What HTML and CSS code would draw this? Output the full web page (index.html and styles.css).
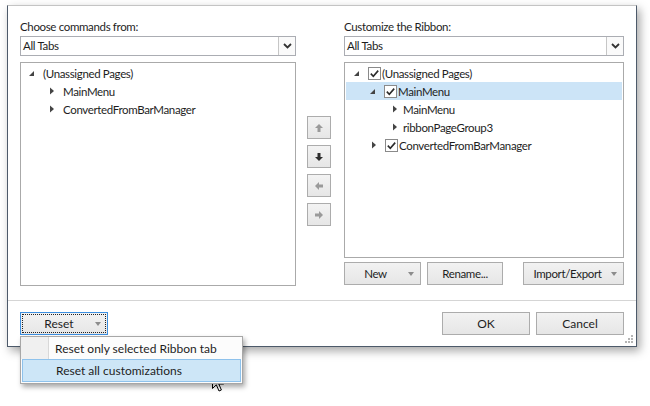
FILE: index.html
```html
<!DOCTYPE html>
<html>
<head>
<meta charset="utf-8">
<link rel="stylesheet" href="styles.css">
</head>
<body>
<div class="dialog">
  <div class="main">
    <section class="panel">
      <div class="label">Choose commands from:</div>
      <div class="combo"><span class="combo-text">All Tabs</span><span class="combo-btn"><svg width="9" height="6" viewBox="0 0 9 6"><path d="M1 1 L4.5 4.5 L8 1" fill="none" stroke="#333" stroke-width="1.8"/></svg></span></div>
      <div class="tree tree-tall">
        <div class="row l0"><svg class="tg" width="10" height="10" viewBox="0 0 10 10"><path d="M1 8 L6 8 L6 3 Z" fill="#444"/></svg><span>(Unassigned Pages)</span></div>
        <div class="row l1"><svg class="tg" width="10" height="10" viewBox="0 0 10 10"><path d="M2 1.5 L6 5 L2 8.5 Z" fill="#444"/></svg><span>MainMenu</span></div>
        <div class="row l1"><svg class="tg" width="10" height="10" viewBox="0 0 10 10"><path d="M2 1.5 L6 5 L2 8.5 Z" fill="#444"/></svg><span>ConvertedFromBarManager</span></div>
      </div>
    </section>
    <div class="movers">
      <button class="mv"><svg width="10" height="10" viewBox="0 0 10 10"><path d="M5 1 L9 5 L6.5 5 L6.5 9 L3.5 9 L3.5 5 L1 5 Z" fill="#9a9a9a"/></svg></button>
      <button class="mv"><svg width="10" height="10" viewBox="0 0 10 10"><path d="M5 9 L9 5 L6.5 5 L6.5 1 L3.5 1 L3.5 5 L1 5 Z" fill="#2e2e2e"/></svg></button>
      <button class="mv"><svg width="10" height="10" viewBox="0 0 10 10"><path d="M1 5 L5 1 L5 3.5 L9 3.5 L9 6.5 L5 6.5 L5 9 Z" fill="#9a9a9a"/></svg></button>
      <button class="mv"><svg width="10" height="10" viewBox="0 0 10 10"><path d="M9 5 L5 1 L5 3.5 L1 3.5 L1 6.5 L5 6.5 L5 9 Z" fill="#9a9a9a"/></svg></button>
    </div>
    <section class="panel panel-right">
      <div class="label">Customize the Ribbon:</div>
      <div class="combo"><span class="combo-text">All Tabs</span><span class="combo-btn"><svg width="9" height="6" viewBox="0 0 9 6"><path d="M1 1 L4.5 4.5 L8 1" fill="none" stroke="#333" stroke-width="1.8"/></svg></span></div>
      <div class="tree tree-short">
        <div class="row r0"><svg class="tg" width="10" height="10" viewBox="0 0 10 10"><path d="M1 8 L6 8 L6 3 Z" fill="#444"/></svg><svg class="cb" width="13" height="13" viewBox="0 0 13 13"><rect x="0.5" y="0.5" width="12" height="12" fill="#fff" stroke="#8a8a8a"/><path d="M2.8 6.6 L5.3 9.2 L10.2 3.6" fill="none" stroke="#2b2b2b" stroke-width="1.6"/></svg><span>(Unassigned Pages)</span></div>
        <div class="row r1 sel"><svg class="tg" width="10" height="10" viewBox="0 0 10 10"><path d="M1 8 L6 8 L6 3 Z" fill="#444"/></svg><svg class="cb" width="13" height="13" viewBox="0 0 13 13"><rect x="0.5" y="0.5" width="12" height="12" fill="#fff" stroke="#8a8a8a"/><path d="M2.8 6.6 L5.3 9.2 L10.2 3.6" fill="none" stroke="#2b2b2b" stroke-width="1.6"/></svg><span>MainMenu</span></div>
        <div class="row r2"><svg class="tg tight" width="10" height="10" viewBox="0 0 10 10"><path d="M2 1.5 L6 5 L2 8.5 Z" fill="#444"/></svg><span>MainMenu</span></div>
        <div class="row r2"><svg class="tg tight" width="10" height="10" viewBox="0 0 10 10"><path d="M2 1.5 L6 5 L2 8.5 Z" fill="#444"/></svg><span>ribbonPageGroup3</span></div>
        <div class="row r1b"><svg class="tg" width="10" height="10" viewBox="0 0 10 10"><path d="M2 1.5 L6 5 L2 8.5 Z" fill="#444"/></svg><svg class="cb" width="13" height="13" viewBox="0 0 13 13"><rect x="0.5" y="0.5" width="12" height="12" fill="#fff" stroke="#8a8a8a"/><path d="M2.8 6.6 L5.3 9.2 L10.2 3.6" fill="none" stroke="#2b2b2b" stroke-width="1.6"/></svg><span>ConvertedFromBarManager</span></div>
      </div>
      <div class="actions">
        <button class="btn btn-new"><span class="btn-label">New</span><span class="dd"></span></button>
        <button class="btn btn-rename">Rename...</button>
        <button class="btn btn-import"><span class="btn-label">Import/Export</span><span class="dd"></span></button>
      </div>
    </section>
  </div>
  <div class="sep"></div>
  <div class="footer">
    <div class="reset-wrap">
      <button class="btn btn-reset"><span class="focus"><span class="btn-label">Reset</span><span class="dd"></span></span></button>
      <div class="menu">
        <div class="menu-item"><span class="gutter"></span><span class="menu-text">Reset only selected Ribbon tab</span></div>
        <div class="menu-item hot"><span class="gutter"></span><span class="menu-text">Reset all customizations</span></div>
      </div>
    </div>
    <div class="footer-right">
      <button class="btn btn-ok">OK</button>
      <button class="btn btn-ok">Cancel</button>
    </div>
  </div>
  <svg class="grip" width="9" height="9" viewBox="0 0 9 9"><g fill="#b5b5b5"><rect x="6" y="0" width="2" height="2"/><rect x="3" y="3" width="2" height="2"/><rect x="6" y="3" width="2" height="2"/><rect x="0" y="6" width="2" height="2"/><rect x="3" y="6" width="2" height="2"/><rect x="6" y="6" width="2" height="2"/></g></svg>
</div>
<svg class="cursor" width="14" height="21" viewBox="0 0 14 21"><path d="M0.5 0.5 L0.5 16.5 L4.3 12.8 L7 19 L9.4 18 L6.8 12 L11.8 12 Z" fill="#fff" stroke="#000" stroke-width="1" stroke-linejoin="miter"/></svg>
</body>
</html>
```
FILE: styles.css
```css
* { box-sizing: border-box; }
html, body { margin: 0; padding: 0; background: #fff; }
body {
  width: 650px;
  height: 406px;
  position: relative;
  overflow: hidden;
  font-family: "Lato", "Liberation Sans", sans-serif;
  font-size: 11.5px;
  letter-spacing: -0.35px;
  color: #1e1e1e;
}
.dialog {
  position: relative;
  margin: 5px 0 0 7px;
  width: 630px;
  background: #fff;
  border: 1px solid #4d5a6a;
  border-top-color: #c4c4c4;
  padding-top: 13px;
  box-shadow: 3px 4px 9px rgba(0,0,0,0.35);
}
.main {
  display: grid;
  grid-template-columns: 276px 48px 280px;
  padding: 0 12px;
}
.panel { display: flex; flex-direction: column; }
.label { height: 15px; line-height: 15px; margin-bottom: 2px; }
.combo {
  height: 20px;
  border: 1px solid #abadb3;
  display: flex;
  align-items: stretch;
}
.combo-text { flex: 1; line-height: 18px; padding-left: 2px; }
.combo-btn {
  width: 17px;
  border-left: 1px solid #c6c6c6;
  display: flex;
  align-items: center;
  justify-content: center;
  background: #fafafa;
}
.tree {
  margin-top: 6px;
  border: 1px solid #aaaaaa;
  padding: 1px;
}
.tree-tall { height: 224px; }
.tree-short { height: 196px; }
.row {
  height: 18px;
  display: flex;
  align-items: center;
  white-space: nowrap;
}
.tg { flex: none; margin-right: 5px; }
.tg.tight { margin-right: 2px; }
.cb { flex: none; margin-right: 1px; }
.l0 { padding-left: 6px; }
.l1 { padding-left: 26px; }
.r0 { padding-left: 7px; }
.r1 { padding-left: 23px; }
.r2 { padding-left: 45px; }
.r1b { padding-left: 24px; }
.sel { background: #cce4f7; }
.movers {
  display: flex;
  flex-direction: column;
  gap: 6px;
  padding: 97px 0 0 11px;
}
button {
  font: inherit;
  letter-spacing: inherit;
  color: inherit;
  margin: 0;
}
.mv {
  width: 24px;
  height: 23px;
  border: 1px solid #acacac;
  background: linear-gradient(#f3f3f3, #e6e6e6);
  display: flex;
  align-items: center;
  justify-content: center;
  padding: 0;
}
.actions {
  display: flex;
  gap: 6px;
  margin-top: 4px;
}
.btn {
  height: 23px;
  border: 1px solid #acacac;
  background: linear-gradient(#f2f2f2, #e6e6e6);
  padding: 0;
  display: flex;
  align-items: center;
  justify-content: center;
  position: relative;
}
.btn-new { width: 77px; }
.btn-rename { width: 76px; }
.btn-import { width: 101px; margin-left: auto; }
.btn-new .btn-label { margin-right: 14px; }
.btn-import .btn-label { margin-right: 12px; }
.dd {
  position: absolute;
  right: 6px;
  top: 9px;
  width: 0; height: 0;
  border-left: 3.5px solid transparent;
  border-right: 3.5px solid transparent;
  border-top: 4px solid #8c8c8c;
}
.sep { height: 1px; background: #d5d5d5; margin-top: 14px; }
.footer {
  display: flex;
  justify-content: space-between;
  padding: 11px 12px 11px 12px;
}
.footer-right { display: flex; gap: 6px; }
.btn-ok { width: 88px; font-size: 12px; letter-spacing: 0; }
.reset-wrap { position: relative; }
.btn-reset {
  width: 88px;
  border-color: #3c8fe0;
  padding: 1px;
  font-size: 12px;
  letter-spacing: 0;
}
.focus {
  display: flex;
  width: 100%;
  height: 100%;
  align-items: center;
  justify-content: center;
  border: 1px dotted #222;
  position: relative;
}
.btn-reset .btn-label { margin-right: 10px; }
.btn-reset .dd { right: 4px; top: 7px; }
.menu {
  position: absolute;
  left: 0;
  top: 24px;
  width: 223px;
  border: 1px solid #a7a7a7;
  background: #fcfcfc;
  padding: 0 1px 1px 0;
  box-shadow: 2px 3px 5px rgba(0,0,0,0.35);
  z-index: 2;
  font-size: 12px;
  letter-spacing: 0;
}
.menu-item {
  height: 22px;
  display: flex;
  align-items: center;
  position: relative;
}
.gutter {
  width: 28px;
  height: 100%;
  background: #f0f0f0;
  border-right: 1px solid #d8d8d8;
  margin-right: 6px;
}
.menu-item.hot {
  margin-left: 1px;
  background: #cde6f7;
  border: 1px solid #8ec2ec;
  height: 23px;
}
.menu-item.hot .gutter { background: transparent; border-right-color: transparent; width: 27px; }
.menu-text { white-space: nowrap; }
.grip { position: absolute; right: 2px; bottom: 2px; }
.cursor { position: absolute; left: 212px; top: 372px; }
```
